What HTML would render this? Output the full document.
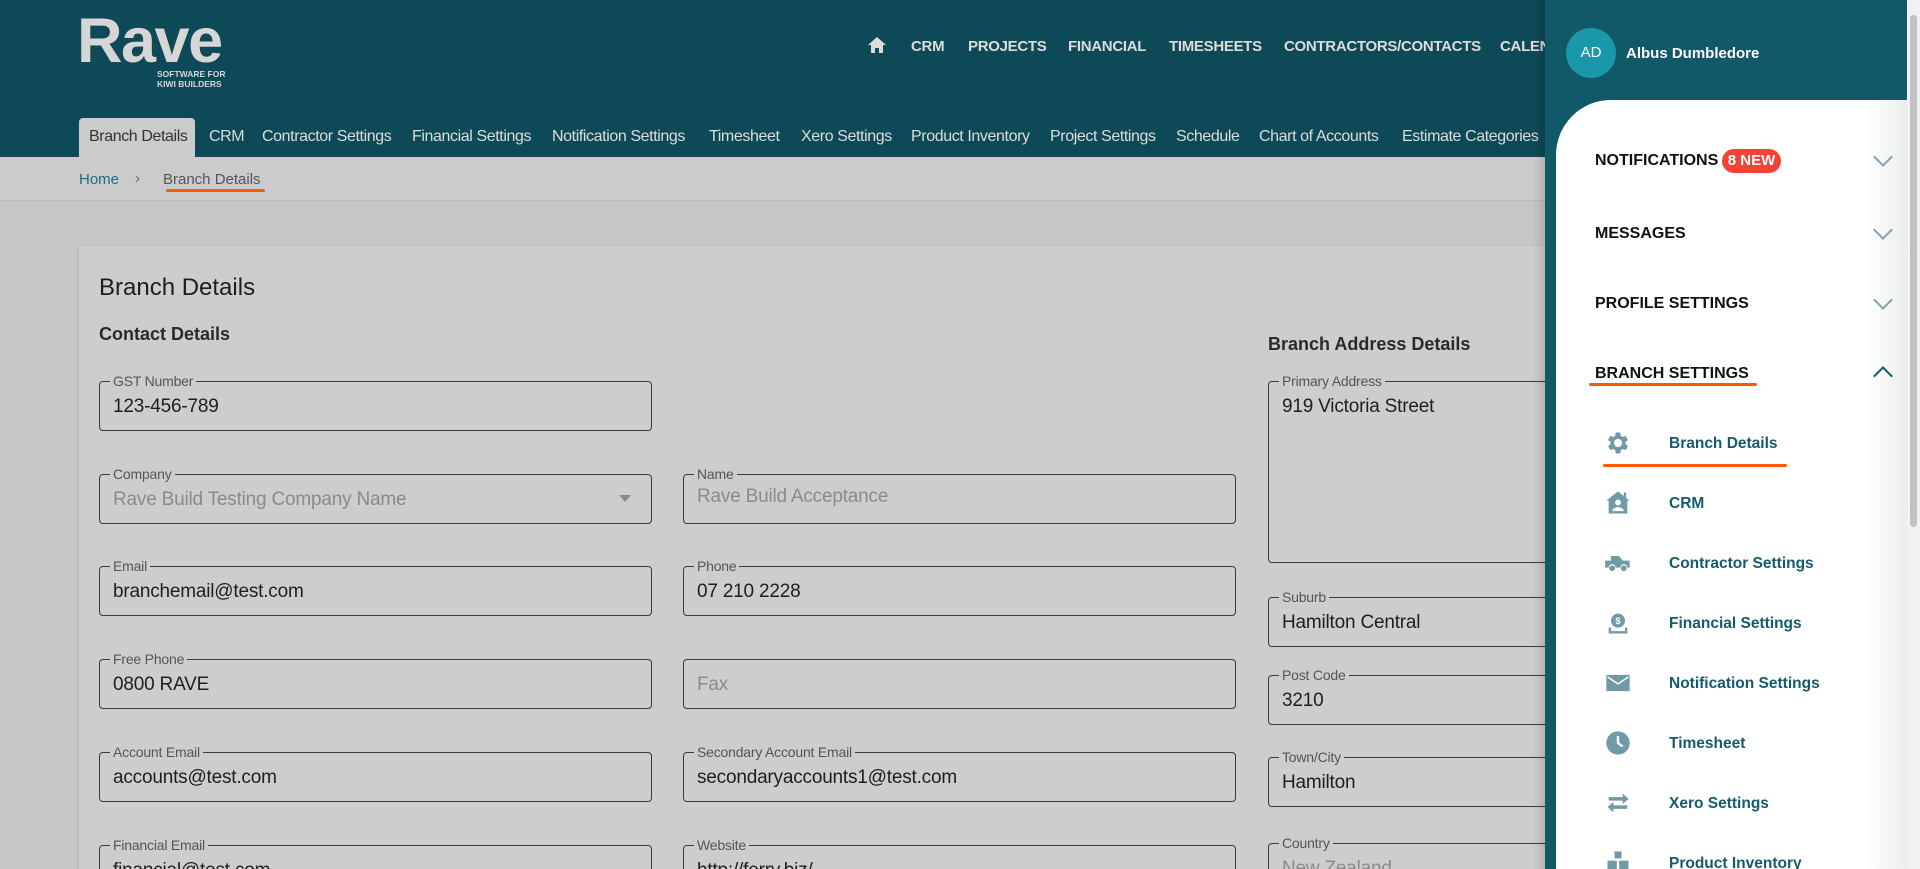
<!DOCTYPE html>
<html><head><meta charset="utf-8"><style>
*{margin:0;padding:0;box-sizing:border-box}
html,body{width:1920px;height:869px;overflow:hidden}
body{position:relative;background:#c6c6c6;font-family:"Liberation Sans",Arial,sans-serif}
#w{position:absolute;left:0;top:0;width:1920px;height:869px;overflow:hidden}
.a{position:absolute;white-space:nowrap}
.hdr{left:0;top:0;width:1920px;height:157px;background:#0e4957}
.nav{font-weight:bold;font-size:15px;color:#dcdcdc;top:38px;letter-spacing:-0.3px}
.tab{font-size:16px;color:#dcdcdc;top:128px;letter-spacing:-0.4px}
.fld{position:absolute;border:1.3px solid #3a3a3a;border-radius:4px}
.lbl{position:absolute;top:-9px;left:10px;background:#cdcdcd;padding:0 3px;font-size:14px;color:#555;line-height:16px;letter-spacing:-0.2px}
.val{position:absolute;left:13px;top:14px;font-size:19px;color:#1e1e1e;letter-spacing:-0.2px}
.dis{color:#8a8a8a}
.mi{font-weight:bold;font-size:16px;color:#111;left:1595px}
.chev{position:absolute;left:1876px;width:14px;height:14px;border-right:2.5px solid #7fa3ad;border-bottom:2.5px solid #7fa3ad;transform:rotate(45deg)}
.si{left:1669px;font-size:15.5px;font-weight:bold;color:#155a6e}
.ic{position:absolute;left:1604px;width:28px;height:28px}
</style></head><body><div id="w">
<div class="a hdr"></div>
<div class="a" style="left:77px;top:8px;font-size:63px;font-weight:bold;color:#d6d6d6;letter-spacing:-1.5px;line-height:66px">Rave</div>
<div class="a" style="left:157px;top:69px;font-size:8.5px;color:#d6d6d6;font-weight:bold;line-height:10px">SOFTWARE FOR<br>KIWI BUILDERS</div>
<svg class="a" style="left:867px;top:36px" width="20" height="18" viewBox="0 0 20 18"><path d="M10 1 L1 9 H4 V17 H8 V12 H12 V17 H16 V9 H19 Z" fill="#dcdcdc"/></svg>
<div class="a nav" style="left:911px">CRM</div>
<div class="a nav" style="left:968px">PROJECTS</div>
<div class="a nav" style="left:1068px">FINANCIAL</div>
<div class="a nav" style="left:1169px">TIMESHEETS</div>
<div class="a nav" style="left:1284px">CONTRACTORS/CONTACTS</div>
<div class="a nav" style="left:1500px">CALENDAR</div>
<div class="a" style="left:79px;top:118px;width:116px;height:40px;background:#cbcbcb;border-radius:4px 4px 0 0"></div>
<div class="a tab" style="left:89px;color:#333">Branch Details</div>
<div class="a tab" style="left:209px">CRM</div>
<div class="a tab" style="left:262px">Contractor Settings</div>
<div class="a tab" style="left:412px">Financial Settings</div>
<div class="a tab" style="left:552px">Notification Settings</div>
<div class="a tab" style="left:709px">Timesheet</div>
<div class="a tab" style="left:801px">Xero Settings</div>
<div class="a tab" style="left:911px">Product Inventory</div>
<div class="a tab" style="left:1050px">Project Settings</div>
<div class="a tab" style="left:1176px">Schedule</div>
<div class="a tab" style="left:1259px">Chart of Accounts</div>
<div class="a tab" style="left:1402px">Estimate Categories</div>
<div class="a" style="left:0;top:157px;width:1545px;height:44px;background:#cbcbcb;border-bottom:1px solid #bdbdbd"></div>
<div class="a" style="left:79px;top:171px;font-size:15px;color:#1b6c80">Home</div>
<div class="a" style="left:135px;top:170px;font-size:15px;color:#666">›</div>
<div class="a" style="left:163px;top:171px;font-size:15px;color:#555">Branch Details</div>
<div class="a" style="left:166px;top:189px;width:99px;height:3px;background:#ff5a00;border-radius:2px"></div>

<div class="a" style="left:79px;top:246px;width:1480px;height:640px;background:#cdcdcd;border-radius:4px;box-shadow:0 1px 3px rgba(0,0,0,.15)"></div>
<div class="a" style="left:99px;top:274px;font-size:24px;color:#1e1e1e">Branch Details</div>
<div class="a" style="left:99px;top:324px;font-size:18px;font-weight:bold;color:#2a2a2a">Contact Details</div>
<div class="a" style="left:1268px;top:334px;font-size:18px;font-weight:bold;color:#2a2a2a">Branch Address Details</div>

<div class="fld" style="left:99px;top:381px;width:553px;height:50px"><span class="lbl">GST Number</span><span class="val">123-456-789</span></div>
<div class="fld" style="left:99px;top:474px;width:553px;height:50px"><span class="lbl">Company</span><span class="val dis">Rave Build Testing Company Name</span><span style="position:absolute;right:20px;top:20px;border:6px solid transparent;border-top:7px solid #8a8a8a"></span></div>
<div class="fld" style="left:683px;top:474px;width:553px;height:50px"><span class="lbl">Name</span><span class="val dis" style="top:11px">Rave Build Acceptance</span></div>
<div class="fld" style="left:99px;top:566px;width:553px;height:50px"><span class="lbl">Email</span><span class="val">branchemail@test.com</span></div>
<div class="fld" style="left:683px;top:566px;width:553px;height:50px"><span class="lbl">Phone</span><span class="val">07 210 2228</span></div>
<div class="fld" style="left:99px;top:659px;width:553px;height:50px"><span class="lbl">Free Phone</span><span class="val">0800 RAVE</span></div>
<div class="fld" style="left:683px;top:659px;width:553px;height:50px"><span class="val dis">Fax</span></div>
<div class="fld" style="left:99px;top:752px;width:553px;height:50px"><span class="lbl">Account Email</span><span class="val">accounts@test.com</span></div>
<div class="fld" style="left:683px;top:752px;width:553px;height:50px"><span class="lbl">Secondary Account Email</span><span class="val">secondaryaccounts1@test.com</span></div>
<div class="fld" style="left:99px;top:845px;width:553px;height:50px"><span class="lbl">Financial Email</span><span class="val">financial@test.com</span></div>
<div class="fld" style="left:683px;top:845px;width:553px;height:50px"><span class="lbl">Website</span><span class="val">http://ferry.biz/</span></div>

<div class="fld" style="left:1268px;top:381px;width:400px;height:182px"><span class="lbl">Primary Address</span><span class="val">919 Victoria Street</span></div>
<div class="fld" style="left:1268px;top:597px;width:400px;height:50px"><span class="lbl">Suburb</span><span class="val">Hamilton Central</span></div>
<div class="fld" style="left:1268px;top:675px;width:400px;height:50px"><span class="lbl">Post Code</span><span class="val">3210</span></div>
<div class="fld" style="left:1268px;top:757px;width:400px;height:50px"><span class="lbl">Town/City</span><span class="val">Hamilton</span></div>
<div class="fld" style="left:1268px;top:843px;width:400px;height:50px"><span class="lbl">Country</span><span class="val dis">New Zealand</span></div>

<div class="a" style="left:1533px;top:0;width:12px;height:869px;background:linear-gradient(to right,rgba(0,0,0,0),rgba(0,0,0,.12))"></div>
<div class="a" style="left:1545px;top:0;width:375px;height:869px;background:#115869"></div>
<div class="a" style="left:1556px;top:100px;width:351px;height:769px;background:linear-gradient(to right,#fff 88%,#eceeee);border-top-left-radius:55px"></div>
<div class="a" style="left:1566px;top:28px;width:50px;height:50px;border-radius:50%;background:#1a97a8;color:#fff;font-size:15px;text-align:center;line-height:50px">AD</div>
<div class="a" style="left:1626px;top:45px;font-size:15px;color:#fff;font-weight:bold">Albus Dumbledore</div>
<div class="a" style="left:1907px;top:0;width:13px;height:869px;background:#f1f1f1"></div>
<div class="a" style="left:1910px;top:15px;width:7px;height:512px;background:#c1c1c1;border-radius:4px"></div>

<div class="a mi" style="top:152px">NOTIFICATIONS</div>
<div class="a" style="left:1722px;top:149px;width:59px;height:24px;background:#f44336;border-radius:12px;color:#fff;font-weight:bold;font-size:15px;text-align:center;line-height:24px">8 NEW</div>
<div class="chev" style="top:150px"></div>
<div class="a mi" style="top:225px">MESSAGES</div>
<div class="chev" style="top:223px"></div>
<div class="a mi" style="top:295px">PROFILE SETTINGS</div>
<div class="chev" style="top:293px"></div>
<div class="a mi" style="top:365px">BRANCH SETTINGS</div>
<div class="chev" style="top:369px;transform:rotate(225deg);border-color:#155a6e"></div>
<div class="a" style="left:1589px;top:383px;width:168px;height:3px;background:#ff5a00;border-radius:2px"></div>

<svg class="ic" style="top:429px" viewBox="0 0 24 24"><path fill="#6f9aa6" d="M19.4 13a7.5 7.5 0 0 0 0-2l2.1-1.6-2-3.5-2.5 1a7 7 0 0 0-1.7-1L15 3h-4l-.4 2.9a7 7 0 0 0-1.7 1l-2.5-1-2 3.5L6.6 11a7.5 7.5 0 0 0 0 2l-2.1 1.6 2 3.5 2.5-1a7 7 0 0 0 1.7 1L11 21h4l.4-2.9a7 7 0 0 0 1.7-1l2.5 1 2-3.5zM13 15.5a3.5 3.5 0 1 1 0-7 3.5 3.5 0 0 1 0 7z" transform="translate(-1 0)"/></svg>
<div class="a si" style="top:435px">Branch Details</div>
<div class="a" style="left:1603px;top:464px;width:184px;height:3px;background:#ff5a00;border-radius:2px"></div>

<svg class="ic" style="top:489px" viewBox="0 0 24 24"><path fill="#6f9aa6" d="M12 2 2 10h2v11h16V10h2l-3-2.4V3h-2v3L12 2zm0 7a2.5 2.5 0 1 1 0 5 2.5 2.5 0 0 1 0-5zm-5 10c0-2 2.5-3.5 5-3.5s5 1.5 5 3.5z"/></svg>
<div class="a si" style="top:495px">CRM</div>
<svg class="ic" style="top:549px" viewBox="0 0 24 24"><path fill="#6f9aa6" d="M6 6h7l3 4h6v6h-2a3 3 0 0 0-6 0h-4a3 3 0 0 0-6 0H1v-6h5zM7 14a2.5 2.5 0 1 1 0 5 2.5 2.5 0 0 1 0-5zm10 0a2.5 2.5 0 1 1 0 5 2.5 2.5 0 0 1 0-5z"/></svg>
<div class="a si" style="top:555px">Contractor Settings</div>
<svg class="ic" style="top:609px" viewBox="0 0 24 24"><circle cx="12" cy="10" r="6" fill="#6f9aa6"/><text x="12" y="13" font-size="8" fill="#fff" text-anchor="middle" font-weight="bold" font-family="Liberation Sans">$</text><path fill="#6f9aa6" d="M4 16h2v3h12v-3h2v5H4z"/></svg>
<div class="a si" style="top:615px">Financial Settings</div>
<svg class="ic" style="top:669px" viewBox="0 0 24 24"><path fill="#6f9aa6" d="M2 5h20v14H2z"/><path fill="#fff" d="M3 6l9 6 9-6v1.5l-9 6-9-6z"/></svg>
<div class="a si" style="top:675px">Notification Settings</div>
<svg class="ic" style="top:729px" viewBox="0 0 24 24"><circle cx="12" cy="12" r="10" fill="#6f9aa6"/><path d="M12 6v6l4 3" stroke="#fff" stroke-width="2" fill="none"/></svg>
<div class="a si" style="top:735px">Timesheet</div>
<svg class="ic" style="top:789px" viewBox="0 0 24 24"><path fill="#6f9aa6" d="M4 7h12V4l5 4.5-5 4.5v-3H4zM20 14H8v-3l-5 4.5L8 20v-3h12z"/></svg>
<div class="a si" style="top:795px">Xero Settings</div>
<svg class="ic" style="top:849px" viewBox="0 0 24 24"><path fill="#6f9aa6" d="M9 2h6v6H9zM3 10h8v8H3zM13 10h8v8h-8z"/></svg>
<div class="a si" style="top:855px">Product Inventory</div>
</div></body></html>
